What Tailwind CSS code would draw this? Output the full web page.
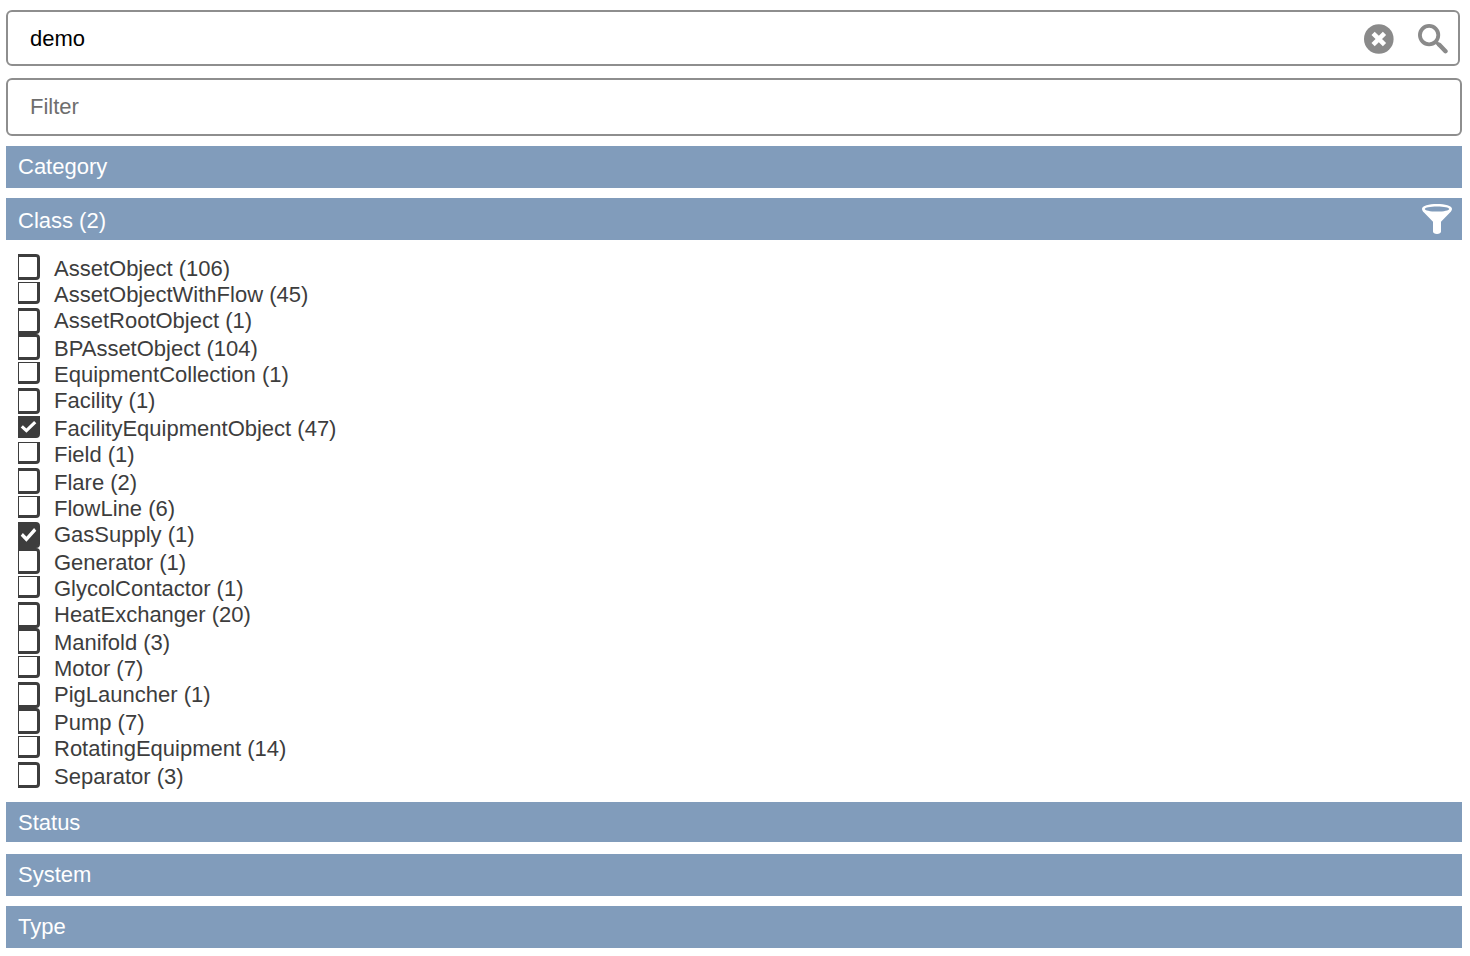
<!DOCTYPE html>
<html lang="en">
<head>
    <meta charset="UTF-8">
    <meta name="viewport" content="width=device-width, initial-scale=1.0">
    <title>Search</title>
    <script src="https://cdn.jsdelivr.net/npm/@tailwindcss/browser@4"></script>
</head>
<body class="bg-white pl-[6px] pr-2 pt-[10px] pb-2 font-['Liberation_Sans',Arial,sans-serif] text-[22px] text-[#3d3d3d]">

    <!-- search + filter -->
    <form class="flex flex-col gap-3" onsubmit="return false">
        <div class="mr-[2px] flex h-14 items-center rounded-md border-2 border-[#8e8e8e] pt-[2px] pr-[10px]">
            <input type="text" id="search" aria-label="Search" value="demo" class="h-full min-w-0 flex-1 pl-[22px] text-black outline-none">
            <button type="button" id="clear-button" aria-label="Clear" class="mr-6">
                <svg class="block size-[30px]" viewBox="0 0 30 30">
                    <circle cx="14.8" cy="15" r="14.8" fill="#8a8a8a"/>
                    <path d="M9.100 9.300l11.400 11.400M20.500 9.300L9.100 20.700" stroke="#fff" stroke-width="4.600"/>
                </svg>
            </button>
            <button type="submit" id="search-button" aria-label="Search">
                <svg class="block size-[30px]" viewBox="0 0 30 30" fill="none" stroke="#8a8a8a">
                    <circle cx="11.100" cy="11.100" r="9.200" stroke-width="3.800"/>
                    <path d="M17.500 17.500l4 4" stroke-width="3.200"/>
                    <path d="M21.300 20.800l6.200 6.400" stroke-width="4.400" stroke-linecap="round"/>
                </svg>
            </button>
        </div>
        <input type="text" id="filter" aria-label="Filter" placeholder="Filter" class="h-[58px] w-full rounded-md border-2 border-[#8e8e8e] pl-[22px] placeholder:text-[#6e6e6e] outline-none">
    </form>

    <!-- facets -->
    <div class="mt-[10px] text-white">
        <button type="button" class="block h-[42px] w-full bg-[#819cbb] pl-3 text-left leading-[42px]">Category</button>

        <div class="mt-[10px] flex h-[42px] items-center bg-[#819cbb] pr-[10px]">
            <button type="button" aria-expanded="true" class="flex-1 pl-3 pt-1 text-left leading-[42px]">Class (2)</button>
            <button type="button" aria-label="Filter class">
                <svg class="block size-[30px]" viewBox="0 0 30 30" fill="#fff">
                    <path fill-rule="evenodd" d="M15 0C7 0 0 1.700 0 4.700c0 1.500.8 2.700 2 3.900l9 9.200V27.500c0 1.500 1.600 2.500 4 2.500s4-1 4-2.500V17.800l9-9.200c1.200-1.200 2-2.400 2-3.900C30 1.700 23 0 15 0zM15 2.400c7 0 12.200 1.100 12.200 2.500S22 7.600 15 7.600 2.800 6.300 2.800 4.900 8 2.400 15 2.400z"/>
                </svg>
            </button>
        </div>

        <ul id="class-list" class="pl-3 py-[14px] text-[#3d3d3d]"></ul>

        <button type="button" class="block h-10 w-full bg-[#819cbb] pl-3 text-left leading-[42px]"><span class="block h-full">Status</span></button>
        <button type="button" class="mt-3 block h-[42px] w-full bg-[#819cbb] pl-3 text-left leading-[42px]">System</button>
        <button type="button" class="mt-[10px] block h-[42px] w-full bg-[#819cbb] pl-3 text-left leading-[42px]">Type</button>
    </div>

<script>
    // label, row classes, tall box?, checked?
    const rows = [
        ['AssetObject (106)', 'h-7 leading-[30px]', true],
        ['AssetObjectWithFlow (45)', 'h-[26px] leading-[26px]', false],
        ['AssetRootObject (1)', 'h-[26px] leading-[26px]', true],
        ['BPAssetObject (104)', 'h-7 leading-[30px]', true],
        ['EquipmentCollection (1)', 'h-[26px] leading-[26px]', false],
        ['Facility (1)', 'h-7 leading-[26px]', true],
        ['FacilityEquipmentObject (47)', 'h-[26px] leading-[26px]', false, true],
        ['Field (1)', 'h-[26px] leading-[26px]', false],
        ['Flare (2)', 'h-7 leading-[30px]', true],
        ['FlowLine (6)', 'h-[26px] leading-[26px]', false],
        ['GasSupply (1)', 'h-[26px] leading-[26px]', true, true],
        ['Generator (1)', 'h-7 leading-[30px]', true],
        ['GlycolContactor (1)', 'h-[26px] leading-[26px]', false],
        ['HeatExchanger (20)', 'h-[26px] leading-[26px]', true],
        ['Manifold (3)', 'h-7 leading-[30px]', true],
        ['Motor (7)', 'h-[26px] leading-[26px]', false],
        ['PigLauncher (1)', 'h-[26px] leading-[26px]', true],
        ['Pump (7)', 'h-7 leading-[30px]', true],
        ['RotatingEquipment (14)', 'h-[26px] leading-[26px]', false],
        ['Separator (3)', 'h-[26px] leading-[30px]', true],
    ];

    document.getElementById('class-list').innerHTML = rows.map(([label, row, tall, checked], i) => `
        <li class="flex items-start ${row}">
            <span class="relative mr-[14px] block">
                <input type="checkbox" id="class-${i}" ${checked ? 'checked' : ''} class="peer block w-[22px] appearance-none border-l border-r-[3px] border-b-[3px] border-[#3d3d3d] checked:bg-[#3d3d3d] ${tall ? 'h-[26px] rounded-r-sm border-t-[3px]' : 'h-[22px] rounded-br-sm border-t'}">
                <svg class="pointer-events-none absolute inset-0 hidden size-full peer-checked:block" viewBox="0 0 22 22" preserveAspectRatio="none" fill="none" stroke="#fff" stroke-width="3.200">
                    <path d="M3.800 10.400l4.600 4.200L17.200 6.200"/>
                </svg>
            </span>
            <label for="class-${i}">${label}</label>
        </li>`).join('');
</script>
</body>
</html>
